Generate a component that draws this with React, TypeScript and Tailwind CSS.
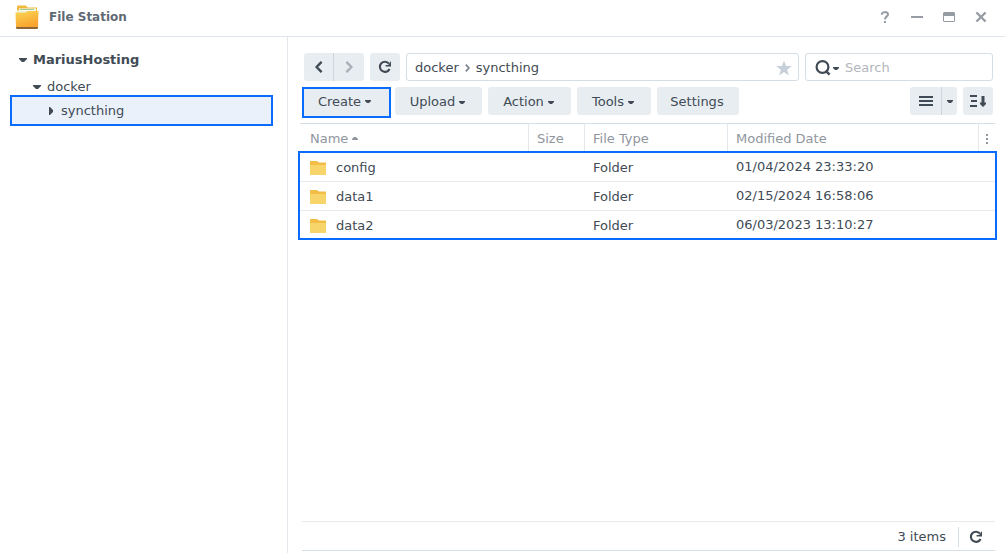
import { useState } from "react";
import clsx from "clsx";

interface FileRow {
  name: string;
  type: string;
  modified: string;
}

const files: FileRow[] = [
  { name: "config", type: "Folder", modified: "01/04/2024 23:33:20" },
  { name: "data1", type: "Folder", modified: "02/15/2024 16:58:06" },
  { name: "data2", type: "Folder", modified: "06/03/2023 13:10:27" }
];

function Caret({ className }: { className?: string }) {
  return (
    <svg className={clsx("shrink-0", className)} width="6" height="3" viewBox="0 0 6 3" fill="currentColor" aria-hidden="true">
      <path d="M0 0h6v1L4 3H2L0 1z" />
    </svg>
  );
}

function TreeCaret() {
  return (
    <svg className="mr-1.5 shrink-0" width="8" height="4" viewBox="0 0 8 4" fill="currentColor" aria-hidden="true">
      <path d="M0 0h8v1L5 4H3L0 1z" />
    </svg>
  );
}

function RefreshIcon() {
  return (
    <svg width="14" height="14" viewBox="0 0 14 14" fill="none" aria-hidden="true">
      <path d="M11 3.6A5.1 5.1 0 1 0 11.6 9" stroke="currentColor" strokeWidth="2.1" />
      <path d="M13 1v5.6H7.6V5h2.6z" fill="currentColor" />
    </svg>
  );
}

function ChevronIcon({ direction }: { direction: "left" | "right" }) {
  return (
    <svg width="8" height="12" viewBox="0 0 8 12" fill="none" stroke="currentColor" strokeWidth="2.4" aria-hidden="true">
      <path d={direction === "left" ? "M6.6 0.8 1.6 6l5 5.2" : "M1.4 0.8 6.4 6l-5 5.2"} />
    </svg>
  );
}

function FolderIcon() {
  return (
    <svg className="shrink-0" width="16" height="14" viewBox="0 0 16 14" aria-hidden="true">
      <path d="M0 0h7l2 1.6h7V5H0z" fill="#f3be48" />
      <path d="M0 4h16v10H0z" fill="#f8d56b" />
    </svg>
  );
}

function AppIcon() {
  return (
    <svg className="shrink-0" width="24" height="25" viewBox="0 0 24 25" aria-hidden="true">
      <defs>
        <linearGradient id="folder-front" x1="0" y1="0" x2="0.4" y2="1">
          <stop offset="0" stopColor="#fad757" />
          <stop offset="1" stopColor="#f9a42e" />
        </linearGradient>
      </defs>
      <path d="M2 1.5 3 0.5h8l1.5 2H22V12H2z" fill="#f0b93c" />
      <path d="M4 3.5h17V10H4z" fill="#f6faf0" />
      <path d="M5 4.5h14" stroke="#9ccf9a" strokeWidth="1" />
      <path d="M2 5.5h8l2 1h9V10H2z" fill="#eef3e0" />
      <path d="M0.5 7.5h10l2-1.5h11L23 22.5H1z" fill="url(#folder-front)" />
      <path d="M1 22h22v1.2l-1 0.8H2l-1-0.8z" fill="#8e6537" />
    </svg>
  );
}

function WindowControls() {
  return (
    <div className="flex items-center text-[#969ca4]">
      <button type="button" aria-label="Help" className="flex h-8 w-8 items-center justify-center">
        <svg width="10" height="12" viewBox="0 0 10 12" fill="none" aria-hidden="true">
          <path d="M1.8 3.8C1.8 0.3 8 0.3 8 3.4 8 5.6 5 5.3 5 8.6" stroke="currentColor" strokeWidth="2" />
          <path d="M4 10h2v2H4z" fill="currentColor" />
        </svg>
      </button>
      <button type="button" aria-label="Minimize" className="flex h-8 w-8 items-center justify-center">
        <svg width="12" height="12" viewBox="0 0 12 12" aria-hidden="true">
          <path d="M0 5h12v2H0z" fill="currentColor" />
        </svg>
      </button>
      <button type="button" aria-label="Maximize" className="flex h-8 w-8 items-center justify-center">
        <svg width="12" height="10" viewBox="0 0 12 10" fill="currentColor" aria-hidden="true">
          <path fillRule="evenodd" d="M1 0h10l1 1v8l-1 1H1L0 9V1zM1 4v5h10V4z" />
        </svg>
      </button>
      <button type="button" aria-label="Close" className="flex h-8 w-8 items-center justify-center">
        <svg width="12" height="10" viewBox="0 0 12 10" fill="none" stroke="currentColor" strokeWidth="2.2" aria-hidden="true">
          <path d="M1.4 0.4 10.6 9.6M10.6 0.4 1.4 9.6" />
        </svg>
      </button>
    </div>
  );
}

function Sidebar() {
  return (
    <nav aria-label="Folders" className="w-72 shrink-0 border-r border-[#e3e6ea] pt-2 pr-3.5 pl-2.5">
      <button type="button" className="flex h-[30px] w-full items-center pl-[9px] font-bold">
        <TreeCaret />
        MariusHosting
      </button>
      <button type="button" className="flex h-6 w-full items-center pl-[23px]">
        <TreeCaret />
        docker
      </button>
      <button
        type="button"
        aria-current="true"
        className="-mt-1 flex h-[31px] w-full items-center border-2 border-[#0a6cff] bg-[#eaf1fb] pl-[37px]"
      >
        <svg className="mr-2" width="4" height="8" viewBox="0 0 4 8" fill="currentColor" aria-hidden="true">
          <path d="M0 0h1l3 3v2L1 8H0z" />
        </svg>
        syncthing
      </button>
    </nav>
  );
}

const iconButton = "flex h-7 items-center justify-center bg-[#e8edf2]";
const menuButton = "flex h-7 items-center justify-center gap-1 rounded-[3px] bg-[#e8edf2] pt-0.5 pr-0.5";

function AddressBar() {
  const [query, setQuery] = useState("");

  return (
    <div className="flex gap-1.5 pr-0.5 pl-1">
      <div className="flex">
        <button type="button" aria-label="Back" className={clsx(iconButton, "w-[30px] rounded-l-[3px] border-r border-[#ccd4dc]")}>
          <ChevronIcon direction="left" />
        </button>
        <button type="button" aria-label="Forward" className={clsx(iconButton, "w-[30px] rounded-r-[3px] text-[#a9b1b9]")}>
          <ChevronIcon direction="right" />
        </button>
      </div>
      <button type="button" aria-label="Refresh" className={clsx(iconButton, "w-[30px] rounded-[3px]")}>
        <RefreshIcon />
      </button>
      <div className="flex h-7 flex-1 items-center rounded-[3px] border border-[#d5dde5] pt-0.5 pr-1.5 pl-2">
        <a href="#docker">docker</a>
        <svg className="mx-1.5" width="5" height="8" viewBox="0 0 5 8" fill="none" stroke="#747d87" strokeWidth="1.6" aria-hidden="true">
          <path d="M0.8 0.6 4 4 0.8 7.4" />
        </svg>
        <a href="#syncthing">syncthing</a>
        <button type="button" aria-label="Add to favorites" className="ml-auto text-[#c6d0da]">
          <svg width="16" height="16" viewBox="0 0 16 16" fill="currentColor" aria-hidden="true">
            <path d="m8 0.4 2 5.5 5.8 0.2-4.6 3.6 1.6 5.7L8 12.1l-4.8 3.3 1.6-5.7L0.2 6.1 6 5.9z" />
          </svg>
        </button>
      </div>
      <div className="flex h-7 w-[188px] items-center rounded-[3px] border border-[#d5dde5] pt-0.5 pl-[9px]">
        <button type="button" aria-label="Search options" className="mr-1.5 flex items-center gap-0.5">
          <svg width="16" height="16" viewBox="0 0 16 16" fill="none" stroke="currentColor" strokeWidth="2.2" aria-hidden="true">
            <circle cx="7.5" cy="7" r="5.9" />
            <path d="m10.6 10.6 4 4" strokeWidth="2.4" />
          </svg>
          <Caret />
        </button>
        <input
          type="text"
          aria-label="Search"
          placeholder="Search"
          value={query}
          onChange={event => setQuery(event.target.value)}
          className="min-w-0 flex-1 outline-none placeholder:text-[#b2b7bd]"
        />
      </div>
    </div>
  );
}

function Toolbar() {
  return (
    <div className="flex items-start gap-1.5 px-0.5">
      <button
        type="button"
        className="-mr-0.5 flex h-[31px] w-[89px] items-center justify-center gap-1 border-2 border-[#0a6cff] bg-[#e8edf2] pr-1 pb-0.5"
      >
        Create <Caret />
      </button>
      <button type="button" className={clsx(menuButton, "w-[87px]")}>
        Upload <Caret />
      </button>
      <button type="button" className={clsx(menuButton, "w-[83px]")}>
        Action <Caret />
      </button>
      <button type="button" className={clsx(menuButton, "w-[74px]")}>
        Tools <Caret />
      </button>
      <button type="button" className={clsx(menuButton, "w-[82px]")}>
        Settings
      </button>
      <div className="ml-auto flex">
        <button type="button" aria-label="List view" className={clsx(iconButton, "w-8 rounded-l-[3px] border-r border-[#ccd4dc]")}>
          <svg width="14" height="10" viewBox="0 0 14 10" fill="currentColor" aria-hidden="true">
            <path d="M0 0h14v2H0zM0 4h14v2H0zM0 8h14v2H0z" />
          </svg>
        </button>
        <button type="button" aria-label="View options" className={clsx(iconButton, "w-[15px] rounded-r-[3px]")}>
          <Caret />
        </button>
      </div>
      <button type="button" aria-label="Sort" className={clsx(iconButton, "w-[30px] rounded-[3px]")}>
        <svg width="16" height="12" viewBox="0 0 16 12" fill="currentColor" aria-hidden="true">
          <path d="M0 0h7v2H0zM1 5h6v2H1zM0 10h7v2H0z" />
          <path d="M11.5 1h3v6.5H16V9l-3 3-3-3V7.5h1.5z" />
        </svg>
      </button>
    </div>
  );
}

function FileTable() {
  return (
    <table className="mt-[5px] w-full table-fixed border-separate border-spacing-0 text-left">
      <colgroup>
        <col className="w-[229px]" />
        <col className="w-14" />
        <col className="w-[143px]" />
        <col />
        <col className="w-4" />
      </colgroup>
      <thead className="text-[#8f969e]">
        <tr className="h-[30px]">
          <th scope="col" aria-sort="ascending" className="border-t border-r border-t-[#d5dde5] border-r-[#e3e8ed] pl-2.5 font-normal">
            <button type="button" className="flex items-center gap-1">
              Name <Caret className="rotate-180" />
            </button>
          </th>
          <th scope="col" className="border-t border-r border-t-[#d5dde5] border-r-[#e3e8ed] pl-2 font-normal">Size</th>
          <th scope="col" className="border-t border-r border-t-[#d5dde5] border-r-[#e3e8ed] pl-2 font-normal">File Type</th>
          <th scope="col" className="border-t border-r border-t-[#d5dde5] border-r-[#e3e8ed] pl-2 font-normal">Modified Date</th>
          <th scope="col" className="border-t border-t-[#d5dde5] font-normal">
            <button type="button" aria-label="Choose columns" className="flex w-full justify-center">
              <svg width="2" height="10" viewBox="0 0 2 10" fill="currentColor" aria-hidden="true">
                <path d="M0 0h2v2H0zM0 4h2v2H0zM0 8h2v2H0z" />
              </svg>
            </button>
          </th>
        </tr>
      </thead>
      <tbody className="outline-2 outline-[#0a6cff] [&>tr:not(:last-child)>td]:border-b [&>tr:not(:last-child)>td]:border-[#e9ebed]">
        {files.map(file => (
          <tr key={file.name} className="h-[29px] last:h-[27px]">
            <td className="pt-0.5 pl-2.5">
              <span className="flex items-center gap-2.5">
                <FolderIcon />
                {file.name}
              </span>
            </td>
            <td />
            <td className="pt-0.5 pl-2">{file.type}</td>
            <td className="pl-2">{file.modified}</td>
            <td />
          </tr>
        ))}
      </tbody>
    </table>
  );
}

export default function App() {
  return (
    <div className="flex min-h-screen flex-col bg-white font-['DejaVu_Sans',sans-serif] text-[13px] leading-5 text-[#414b55]">
      <header className="flex h-[37px] items-center border-b border-[#dfe5ec] pr-2 pb-0.5 pl-[15px]">
        <AppIcon />
        <h1 className="ml-2.5 flex-1 text-[12px] font-bold text-[#5f6973]">File Station</h1>
        <WindowControls />
      </header>
      <div className="flex flex-1">
        <Sidebar />
        <main className="flex min-w-0 flex-1 flex-col pt-4 pr-2.5 pb-0.5 pl-3">
          <AddressBar />
          <div className="mt-1.5">
            <Toolbar />
          </div>
          <FileTable />
          <footer className="mt-auto ml-0.5 flex h-[30px] items-center justify-end border-t border-b border-t-[#e9ebed] border-b-[#d5dde5] pt-0.5 pr-3">
            <span className="mr-3">{files.length} items</span>
            <button type="button" aria-label="Reload list" className="flex h-5 items-center border-l border-[#d5dde5] pl-2.5">
              <RefreshIcon />
            </button>
          </footer>
        </main>
      </div>
    </div>
  );
}
